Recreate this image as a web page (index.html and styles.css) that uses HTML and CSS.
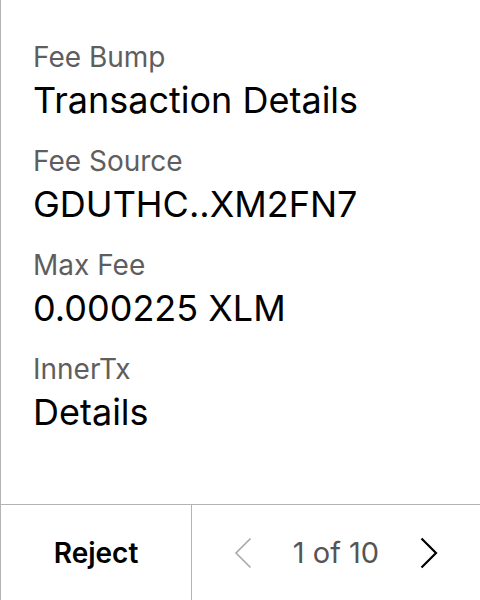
FILE: index.html
```html
<!DOCTYPE html>
<html>
<head>
<meta charset="utf-8">
<link rel="stylesheet" href="styles.css">
</head>
<body>
<div class="screen">
  <main class="content">
    <div class="field">
      <div class="label">Fee Bump</div>
      <div class="value">Transaction Details</div>
    </div>
    <div class="field">
      <div class="label">Fee Source</div>
      <div class="value">GDUTHC..XM2FN7</div>
    </div>
    <div class="field">
      <div class="label">Max Fee</div>
      <div class="value">0.000225 XLM</div>
    </div>
    <div class="field">
      <div class="label">InnerTx</div>
      <div class="value">Details</div>
    </div>
  </main>
  <footer class="footer">
    <div class="reject">Reject</div>
    <div class="pager">
      <svg class="chev chev-prev" width="18" height="32" viewBox="0 0 18 32"><path d="M16.5 1.5 L2 16 L16.5 30.5" fill="none" stroke="#a8a8a8" stroke-width="1.6"/></svg>
      <span class="count">1 of 10</span>
      <svg class="chev chev-next" width="18" height="32" viewBox="0 0 18 32"><path d="M1.5 1.5 L16 16 L1.5 30.5" fill="none" stroke="#000" stroke-width="2.2"/></svg>
    </div>
  </footer>
</div>
</body>
</html>
```

FILE: styles.css
```css
* { box-sizing: border-box; }
html, body { margin: 0; padding: 0; background: #fff; }
body {
  font-family: Inter, "Noto Sans", sans-serif;
  color: #000;
}
.screen {
  width: 480px;
  height: 600px;
  display: flex;
  flex-direction: column;
  border-left: 1px solid #b3b3b3;
}
.content {
  flex: 1;
  padding: 40px 0 0 32px;
  display: flex;
  flex-direction: column;
  gap: 22px;
}
.label {
  font-size: 28px;
  line-height: 34px;
  color: #5e5e5e;
}
.value {
  font-size: 36px;
  line-height: 44px;
  margin-top: 4px;
  color: #000;
}
.footer {
  height: 96px;
  border-top: 1px solid #b3b3b3;
  display: flex;
}
.reject {
  width: 191px;
  border-right: 1px solid #b3b3b3;
  display: flex;
  align-items: center;
  justify-content: center;
  font-size: 28px;
  font-weight: 600;
}
.pager {
  flex: 1;
  display: flex;
  align-items: center;
  justify-content: center;
  gap: 41px;
}
.count {
  font-size: 29px;
  color: #555;
}
.chev { display: block; }
```
